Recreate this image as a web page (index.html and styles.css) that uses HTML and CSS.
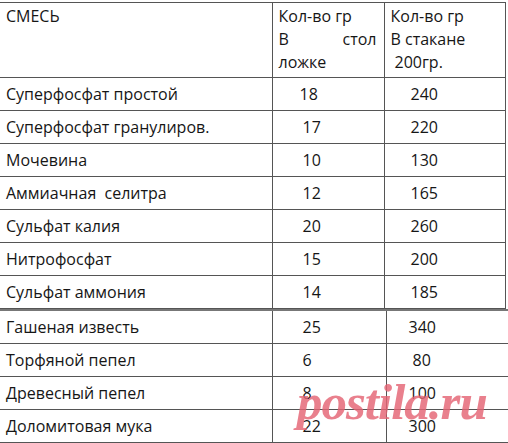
FILE: index.html
```html
<!DOCTYPE html>
<html lang="ru">
<head>
<meta charset="utf-8">
<title>Смеси</title>
<link rel="stylesheet" href="styles.css">
</head>
<body>
<div class="page">
  <table class="grid upper">
    <colgroup><col class="c1"><col class="c2"><col class="c3"></colgroup>
    <tr class="head">
      <td class="name">СМЕСЬ</td>
      <td class="h2"><div>Кол-во гр</div><div class="just"><span>В</span><span>стол</span></div><div>ложке</div></td>
      <td class="h3"><div>Кол-во гр</div><div>В стакане</div><div class="ind">200гр.</div></td>
    </tr>
    <tr><td class="name">Суперфосфат простой</td><td class="v2 first">18</td><td class="v3">240</td></tr>
    <tr><td class="name">Суперфосфат гранулиров.</td><td class="v2">17</td><td class="v3">220</td></tr>
    <tr><td class="name">Мочевина</td><td class="v2">10</td><td class="v3">130</td></tr>
    <tr><td class="name">Аммиачная&nbsp; селитра</td><td class="v2">12</td><td class="v3">165</td></tr>
    <tr><td class="name">Сульфат калия</td><td class="v2">20</td><td class="v3">260</td></tr>
    <tr><td class="name">Нитрофосфат</td><td class="v2">15</td><td class="v3">200</td></tr>
    <tr><td class="name">Сульфат аммония</td><td class="v2">14</td><td class="v3">185</td></tr>
  </table>
  <table class="grid lower">
    <colgroup><col class="c1"><col class="c2l"><col class="c3l"></colgroup>
    <tr><td class="name">Гашеная известь</td><td class="v2">25</td><td class="v3">340</td></tr>
    <tr><td class="name">Торфяной пепел</td><td class="v2">6</td><td class="v3 shift">80</td></tr>
    <tr><td class="name">Древесный пепел</td><td class="v2">8</td><td class="v3">100</td></tr>
    <tr><td class="name">Доломитовая мука</td><td class="v2">22</td><td class="v3">300</td></tr>
  </table>
  <div class="mark">postila.ru</div>
</div>
</body>
</html>
```
FILE: styles.css
```css
html, body {
  margin: 0;
  padding: 0;
  background: #fff;
}
.page {
  position: relative;
  width: 508px;
  height: 443px;
  overflow: hidden;
  padding-top: 2px;
  box-sizing: border-box;
  font-family: "Open Sans", "Noto Sans", sans-serif;
  font-size: 16px;
  color: #161616;
}
.grid {
  border-collapse: collapse;
  table-layout: fixed;
}
.upper { width: 505px; }
.lower { width: 508px; }
.c1 { width: 272px; }
.c2 { width: 112px; }
.c3 { width: 121px; }
.c2l { width: 114px; }
.c3l { width: 122px; }
.grid td {
  border-top: 1px solid #555;
  border-bottom: 1px solid #555;
  padding: 0;
  height: 32px;
  line-height: 20px;
  vertical-align: middle;
  white-space: nowrap;
}
.grid td + td {
  border-left: 1px solid #555;
}
.upper td:last-child {
  border-right: 1px solid #555;
}
.lower tr:first-child td {
  border-top: 2px solid #777;
}
.name { padding-left: 6px !important; }
.head td {
  height: 72px;
  vertical-align: top;
  line-height: 23px;
  padding-top: 2px;
}
.h2 { padding: 2px 7px 0 6px !important; }
.h3 { padding: 2px 0 0 6px !important; }
.just {
  display: flex;
  justify-content: space-between;
}
.ind { padding-left: 4px; }
.v2 { padding-left: 30px !important; }
.v2.first { padding-left: 27px !important; }
.v3 { padding-left: 26px !important; }
.lower .v3 { padding-left: 22px !important; }
.lower .v3.shift { padding-left: 26px !important; }
.mark {
  position: absolute;
  left: 297px;
  top: 374px;
  font-family: "Liberation Serif", serif;
  font-weight: bold;
  font-style: italic;
  font-size: 51px;
  line-height: 56px;
  color: rgba(228, 100, 116, 0.82);
  letter-spacing: -1px;
}
```
